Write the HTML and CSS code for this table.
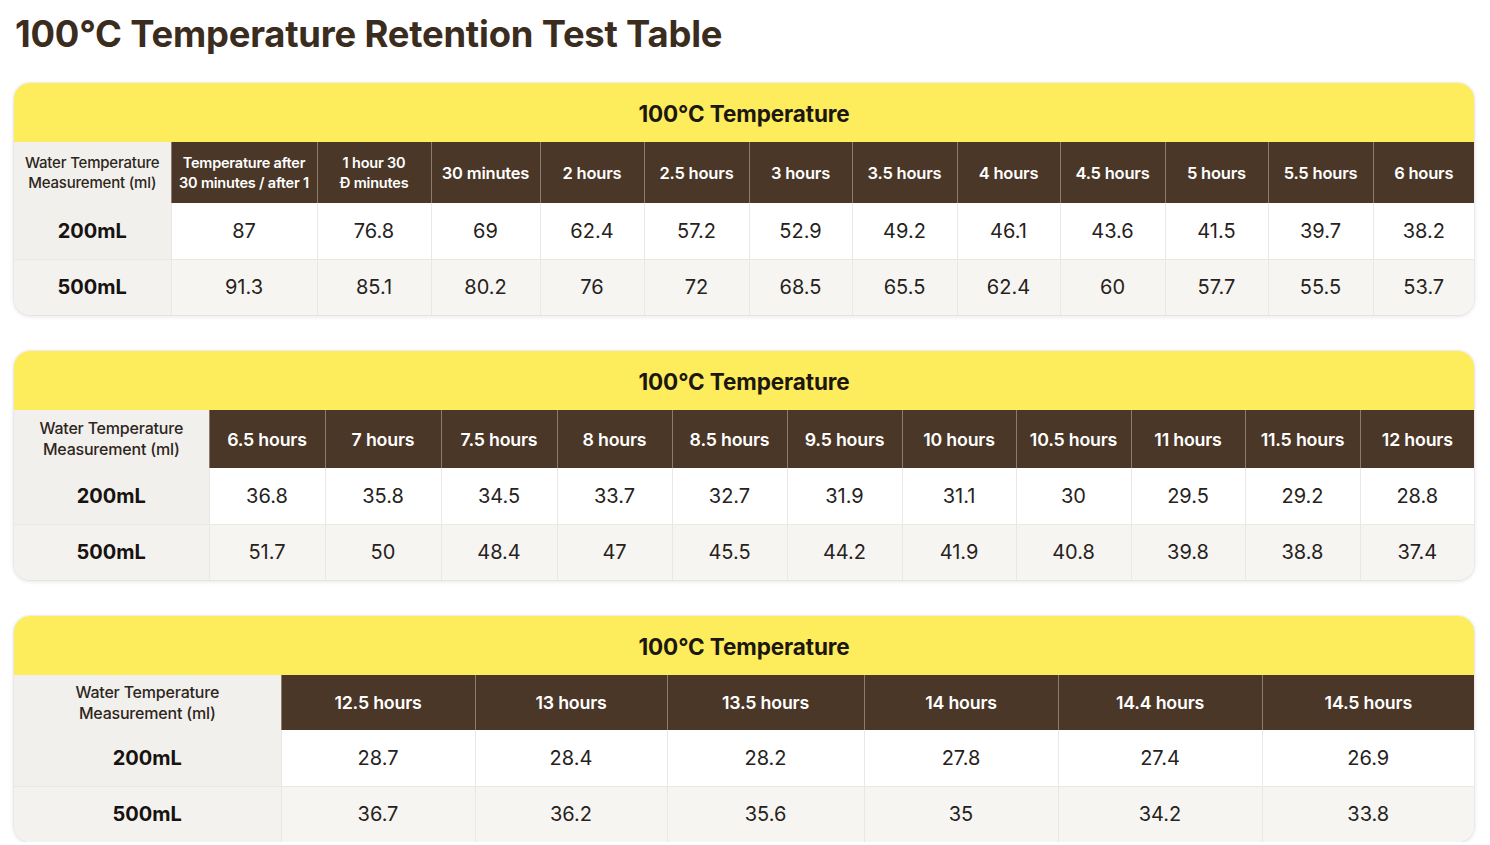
FILE: index.html
```html
<!DOCTYPE html>
<html lang="en">
<head>
<meta charset="utf-8">
<title>100°C Temperature Retention Test Table</title>
<link rel="stylesheet" href="styles.css">
</head>
<body>
<div class="page">
  <h1 class="title">100°C Temperature Retention Test Table</h1>

  <div class="card">
    <table class="grid t1">
      <colgroup>
        <col><col><col><col><col><col><col><col><col><col><col><col><col>
      </colgroup>
      <thead>
        <tr class="band"><th colspan="13">100°C Temperature</th></tr>
        <tr class="heads h1row">
          <th class="lab">Water Temperature<br>Measurement (ml)</th>
          <th class="small">Temperature after<br>30 minutes / after 1</th>
          <th class="small">1 hour 30<br>Ð minutes</th>
          <th>30 minutes</th>
          <th>2 hours</th>
          <th>2.5 hours</th>
          <th>3 hours</th>
          <th>3.5 hours</th>
          <th>4 hours</th>
          <th>4.5 hours</th>
          <th>5 hours</th>
          <th>5.5 hours</th>
          <th>6 hours</th>
        </tr>
      </thead>
      <tbody>
        <tr class="r1">
          <th>200mL</th>
          <td>87</td><td>76.8</td><td>69</td><td>62.4</td><td>57.2</td><td>52.9</td><td>49.2</td><td>46.1</td><td>43.6</td><td>41.5</td><td>39.7</td><td>38.2</td>
        </tr>
        <tr class="r2">
          <th>500mL</th>
          <td>91.3</td><td>85.1</td><td>80.2</td><td>76</td><td>72</td><td>68.5</td><td>65.5</td><td>62.4</td><td>60</td><td>57.7</td><td>55.5</td><td>53.7</td>
        </tr>
      </tbody>
    </table>
  </div>

  <div class="card">
    <table class="grid t2">
      <colgroup>
        <col><col><col><col><col><col><col><col><col><col><col><col>
      </colgroup>
      <thead>
        <tr class="band"><th colspan="12">100°C Temperature</th></tr>
        <tr class="heads h2row">
          <th class="lab">Water Temperature<br>Measurement (ml)</th>
          <th>6.5 hours</th>
          <th>7 hours</th>
          <th>7.5 hours</th>
          <th>8 hours</th>
          <th>8.5 hours</th>
          <th>9.5 hours</th>
          <th>10 hours</th>
          <th>10.5 hours</th>
          <th>11 hours</th>
          <th>11.5 hours</th>
          <th>12 hours</th>
        </tr>
      </thead>
      <tbody>
        <tr class="r1">
          <th>200mL</th>
          <td>36.8</td><td>35.8</td><td>34.5</td><td>33.7</td><td>32.7</td><td>31.9</td><td>31.1</td><td>30</td><td>29.5</td><td>29.2</td><td>28.8</td>
        </tr>
        <tr class="r2">
          <th>500mL</th>
          <td>51.7</td><td>50</td><td>48.4</td><td>47</td><td>45.5</td><td>44.2</td><td>41.9</td><td>40.8</td><td>39.8</td><td>38.8</td><td>37.4</td>
        </tr>
      </tbody>
    </table>
  </div>

  <div class="card">
    <table class="grid t3">
      <colgroup>
        <col><col><col><col><col><col><col>
      </colgroup>
      <thead>
        <tr class="band"><th colspan="7">100°C Temperature</th></tr>
        <tr class="heads h3row">
          <th class="lab">Water Temperature<br>Measurement (ml)</th>
          <th>12.5 hours</th>
          <th>13 hours</th>
          <th>13.5 hours</th>
          <th>14 hours</th>
          <th>14.4 hours</th>
          <th>14.5 hours</th>
        </tr>
      </thead>
      <tbody>
        <tr class="r1">
          <th>200mL</th>
          <td>28.7</td><td>28.4</td><td>28.2</td><td>27.8</td><td>27.4</td><td>26.9</td>
        </tr>
        <tr class="r2">
          <th>500mL</th>
          <td>36.7</td><td>36.2</td><td>35.6</td><td>35</td><td>34.2</td><td>33.8</td>
        </tr>
      </tbody>
    </table>
  </div>
</div>
</body>
</html>
```

FILE: styles.css
```css
* { box-sizing: border-box; }

html, body {
  margin: 0;
  padding: 0;
  background: #ffffff;
}

body {
  font-family: Inter, "Noto Sans", "Liberation Sans", sans-serif;
  color: #222;
}

.page {
  width: 1490px;
  padding: 12px 16px 0 14px;
  display: flex;
  flex-direction: column;
  gap: 36px;
}

.title {
  margin: 0 0 -9px 1px;
  font-size: 36.4px;
  line-height: 44px;
  font-weight: 700;
  color: #3b2c20;
  letter-spacing: -0.2px;
}

.card {
  width: 1460px;
  border-radius: 16px;
  overflow: hidden;
  background: #fff;
  box-shadow: 0 1px 4px rgba(60, 45, 30, 0.16), 0 0 0 1px rgba(60, 45, 30, 0.04);
}

.grid {
  width: 1460px;
  border-collapse: collapse;
  table-layout: fixed;
}

.grid th,
.grid td {
  padding: 0;
  text-align: center;
  vertical-align: middle;
}

/* Yellow title band */
.band th {
  height: 59px;
  background: #fdec5b;
  color: #1c1712;
  font-size: 22.5px;
  font-weight: 700;
  letter-spacing: -0.1px;
  padding-top: 1px;
}

/* Column headings */
.heads th {
  background: #4b3727;
  color: #ffffff;
  font-size: 16.5px;
  font-weight: 600;
  border-left: 1px solid #8c7b6b;
  letter-spacing: -0.2px;
}

.h2row th,
.h3row th {
  font-size: 17.8px;
}

.heads th.small {
  font-size: 14.5px;
  line-height: 20px;
}

.heads th.lab {
  background: #f2f0ed;
  color: #2d2620;
  font-size: 15px;
  font-weight: 500;
  line-height: 20px;
  border-left: none;
}

.h2row th.lab,
.h3row th.lab {
  font-size: 16px;
  line-height: 21px;
}

.h1row th { height: 61px; }
.h2row th { height: 58px; }
.h3row th { height: 55px; }

/* Body rows */
tbody th,
tbody td {
  height: 56px;
  border-left: 1px solid #ebe8e3;
}

tbody tr.r2 th,
tbody tr.r2 td {
  border-top: 1px solid #ebe8e3;
}

tbody th {
  font-size: 20px;
  font-weight: 700;
  color: #161310;
  background: #f2f0ed;
  border-left: none;
}

tbody td {
  font-size: 20px;
  font-weight: 400;
  color: #262220;
}

tr.r1 td { background: #ffffff; }
tr.r2 td { background: #f7f5f2; }
tr.r2 th { background: #f4f2ef; }

/* Column widths */
.t1 col:nth-child(1) { width: 157px; }
.t1 col:nth-child(2) { width: 146px; }
.t1 col:nth-child(3) { width: 114px; }
.t1 col:nth-child(4) { width: 109px; }
.t1 col:nth-child(5) { width: 104px; }
.t1 col:nth-child(6) { width: 105px; }
.t1 col:nth-child(7) { width: 103px; }
.t1 col:nth-child(8) { width: 105px; }
.t1 col:nth-child(9) { width: 103px; }
.t1 col:nth-child(10) { width: 105px; }
.t1 col:nth-child(11) { width: 103px; }
.t1 col:nth-child(12) { width: 105px; }
.t1 col:nth-child(13) { width: 101px; }

.t2 col:nth-child(1) { width: 195px; }
.t2 col:nth-child(2),
.t2 col:nth-child(3),
.t2 col:nth-child(4) { width: 116px; }
.t2 col:nth-child(5),
.t2 col:nth-child(6),
.t2 col:nth-child(7),
.t2 col:nth-child(9),
.t2 col:nth-child(11) { width: 115px; }
.t2 col:nth-child(8),
.t2 col:nth-child(10),
.t2 col:nth-child(12) { width: 114px; }

.t3 col:nth-child(1) { width: 267px; }
.t3 col:nth-child(2) { width: 194px; }
.t3 col:nth-child(3) { width: 192px; }
.t3 col:nth-child(4) { width: 197px; }
.t3 col:nth-child(5) { width: 194px; }
.t3 col:nth-child(6) { width: 204px; }
.t3 col:nth-child(7) { width: 212px; }
```
